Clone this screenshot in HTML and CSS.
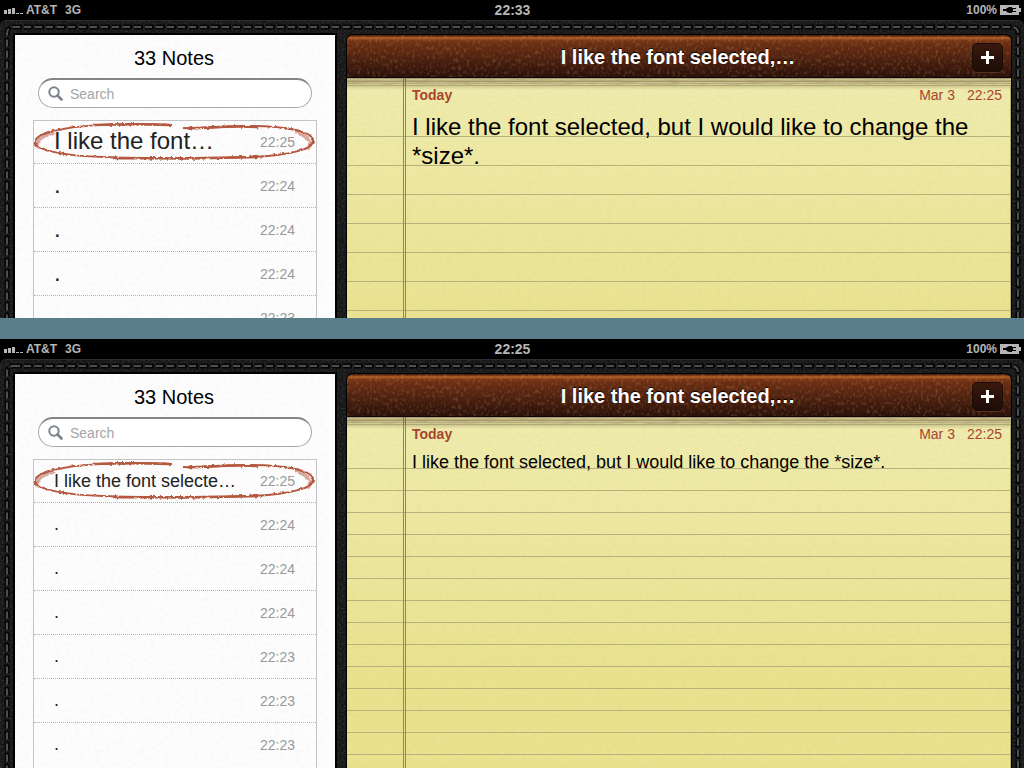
FILE: index.html
```
<!DOCTYPE html>
<html lang="en">

<head>
    <meta charset="utf-8">
    <title>Notes</title>
    <link rel="stylesheet" href="styles.css">
</head>

<body>
    <!-- shared drawings -->
    <svg class="defs" width="0" height="0" aria-hidden="true">
        <defs>
            <filter id="rough" x="-5%" y="-20%" width="110%" height="140%">
                <feTurbulence type="fractalNoise" baseFrequency="0.3" numOctaves="2" seed="4" result="n" />
                <feDisplacementMap in="SourceGraphic" in2="n" scale="3" xChannelSelector="R" yChannelSelector="G" />
            </filter>
            <symbol id="signal" viewBox="0 0 19 6">
                <path d="M0 2h3v4h-3zM4 1h3v5h-3zM8 0h3v6h-3zM12 5h3v1h-3zM16 5h3v1h-3z" fill="#b5b5b5" />
            </symbol>
            <symbol id="battery" viewBox="0 0 21 10">
                <path d="M0 0h19v3h2v4h-2v3h-19z" fill="#b5b5b5" />
                <path d="M3 4h3c1-1 2-2 4-2h2v1h4v1h-3v2h3v1h-4v1h-2c-2 0-3-1-4-2h-3z" fill="#000" />
            </symbol>
            <symbol id="lens" viewBox="0 0 15 15">
                <circle cx="6" cy="6" r="4.7" fill="none" stroke="#7c838e" stroke-width="2" />
                <path d="M9.5 9.5l4 4" stroke="#7c838e" stroke-width="2.6" stroke-linecap="round" />
            </symbol>
            <symbol id="circled" viewBox="0 0 284 42">
                <g fill="none" stroke="#b5583f" filter="url(#rough)">
                    <path d="M139 4C100 2 55 3 30 8C8 12 1 17 2 22C5 30 35 35 70 36C130 38 190 38 235 35C265 32 281 27 280 19C279 11 256 5 215 5C190 5 170 8 150 7" stroke-width="2" />
                    <path d="M60 4C90 3 110 3 136 4M155 7C180 7 195 4 225 6M80 37C120 38 170 37 225 36" stroke-width="2.5" />
                    <path d="M22 11C3 16 2 23 6 28M262 10C276 16 281 22 274 28" stroke-width="4" opacity=".5" />
                </g>
            </symbol>
        </defs>
    </svg>

    <section class="device device-top">
        <div class="status">
            <div class="carrier"><svg class="signal"><use href="#signal" /></svg><span>AT&amp;T</span><span>3G</span></div>
            <div class="clock">22:33</div>
            <div class="power"><span>100%</span><svg class="battery"><use href="#battery" /></svg></div>
        </div>
        <div class="case">
            <svg class="stitch" aria-hidden="true"><rect class="groove" /><rect class="thread" /></svg>
            <aside class="sidebar">
                <h2>33 Notes</h2>
                <div class="search">
                    <svg class="lens"><use href="#lens" /></svg>
                    <input type="search" placeholder="Search" aria-label="Search">
                </div>
                <ul class="list list-large">
                    <li class="selected"><svg class="circled"><use href="#circled" /></svg><a href="#">I like the font…</a><time>22:25</time></li>
                    <li><a href="#">.</a><time>22:24</time></li>
                    <li><a href="#">.</a><time>22:24</time></li>
                    <li><a href="#">.</a><time>22:24</time></li>
                    <li><a href="#">.</a><time>22:23</time></li>
                </ul>
            </aside>
            <main class="note">
                <header class="leather">
                    <h1>I like the font selected,…</h1>
                    <button class="add" type="button" aria-label="New note"></button>
                </header>
                <div class="torn"></div>
                <article class="paper paper-large">
                    <div class="date"><b>Today</b><span>Mar 3</span><span>22:25</span></div>
                    <p>I like the font selected, but I would like to change the *size*.</p>
                </article>
            </main>
        </div>
    </section>

    <section class="device device-bottom">
        <div class="status">
            <div class="carrier"><svg class="signal"><use href="#signal" /></svg><span>AT&amp;T</span><span>3G</span></div>
            <div class="clock">22:25</div>
            <div class="power"><span>100%</span><svg class="battery"><use href="#battery" /></svg></div>
        </div>
        <div class="case">
            <svg class="stitch" aria-hidden="true"><rect class="groove" /><rect class="thread" /></svg>
            <aside class="sidebar">
                <h2>33 Notes</h2>
                <div class="search">
                    <svg class="lens"><use href="#lens" /></svg>
                    <input type="search" placeholder="Search" aria-label="Search">
                </div>
                <ul class="list">
                    <li class="selected"><svg class="circled"><use href="#circled" /></svg><a href="#">I like the font selecte…</a><time>22:25</time></li>
                    <li><a href="#">.</a><time>22:24</time></li>
                    <li><a href="#">.</a><time>22:24</time></li>
                    <li><a href="#">.</a><time>22:24</time></li>
                    <li><a href="#">.</a><time>22:23</time></li>
                    <li><a href="#">.</a><time>22:23</time></li>
                    <li><a href="#">.</a><time>22:23</time></li>
                </ul>
            </aside>
            <main class="note">
                <header class="leather">
                    <h1>I like the font selected,…</h1>
                    <button class="add" type="button" aria-label="New note"></button>
                </header>
                <div class="torn"></div>
                <article class="paper">
                    <div class="date"><b>Today</b><span>Mar 3</span><span>22:25</span></div>
                    <p>I like the font selected, but I would like to change the *size*.</p>
                </article>
            </main>
        </div>
    </section>
</body>

</html>
```

FILE: styles.css
```
* {
    box-sizing: border-box;
}

body {
    margin: 0;
    height: 100vh;
    display: flex;
    flex-direction: column;
    gap: 21px;
    background: #5b7f8a;
    font-family: "Liberation Sans", Arial, sans-serif;
    overflow: hidden;
}

.defs {
    position: absolute;
}

.device {
    display: flex;
    flex-direction: column;
    overflow: hidden;
    background: #000;
    min-height: 0;
}

.device-top {
    flex: 318 1 0;
}

.device-bottom {
    flex: 429 1 0;
}

/* status bar */
.status {
    flex: none;
    display: grid;
    grid-template-columns: 1fr auto 1fr;
    align-items: center;
    height: 20px;
    padding: 0 3px 1px 4px;
    color: #b5b5b5;
    font-size: 12px;
    font-weight: bold;
}

.clock {
    font-size: 14px;
}

.carrier,
.power {
    display: flex;
    align-items: center;
}

.carrier {
    gap: 8px;
}

.signal {
    width: 19px;
    height: 6px;
    margin: 3px -5px 0 0;
}

.power {
    justify-content: flex-end;
    gap: 3px;
}

.battery {
    width: 21px;
    height: 10px;
}

/* black leather case */
.case {
    position: relative;
    flex: 1;
    display: flex;
    gap: 12px;
    min-height: 0;
    padding: 14px 13px 0 15px;
    border-top: 1px solid #2c2f30;
    border-radius: 6px 6px 0 0;
    background: url("data:image/svg+xml,%3Csvg xmlns='http://www.w3.org/2000/svg' width='200' height='200'%3E%3Cfilter id='f' x='0' y='0' width='1' height='1'%3E%3CfeTurbulence type='fractalNoise' baseFrequency='.5' numOctaves='2' stitchTiles='stitch'/%3E%3CfeColorMatrix values='0 0 0 0 .35 0 0 0 0 .36 0 0 0 0 .36 .8 0 0 0 -.3'/%3E%3C/filter%3E%3Crect width='200' height='200' filter='url(%23f)' opacity='.5'/%3E%3C/svg%3E") #151515;
}

.stitch {
    position: absolute;
    inset: 0;
    width: 100%;
    height: 100%;
}

.stitch rect {
    x: 7px;
    y: 6px;
    width: calc(100% - 13px);
    height: calc(100% + 40px);
    rx: 6px;
    fill: none;
}

.groove {
    stroke: #060606;
    stroke-width: 5px;
    stroke-dasharray: 9 2;
}

.thread {
    stroke: #6c6e6e;
    stroke-width: 2px;
    stroke-dasharray: 7 4;
    stroke-opacity: .7;
}

/* list of notes */
.sidebar {
    position: relative;
    flex: none;
    width: 320px;
    padding: 0 18px;
    background: url("data:image/svg+xml,%3Csvg xmlns='http://www.w3.org/2000/svg' width='200' height='200'%3E%3Cfilter id='f' x='0' y='0' width='1' height='1'%3E%3CfeTurbulence type='fractalNoise' baseFrequency='.2 .25' numOctaves='3' stitchTiles='stitch'/%3E%3CfeColorMatrix values='0 0 0 0 .5 0 0 0 0 .5 0 0 0 0 .5 .7 0 0 0 -.27'/%3E%3C/filter%3E%3Crect width='200' height='200' filter='url(%23f)' opacity='.2'/%3E%3C/svg%3E") #fdfdfd;
    box-shadow: 0 0 0 2px #000;
}

.sidebar h2 {
    margin: 0 2px 0 0;
    padding-top: 11px;
    font-size: 20px;
    line-height: 24px;
    font-weight: normal;
    text-align: center;
}

.search {
    display: flex;
    align-items: center;
    gap: 7px;
    height: 30px;
    margin: 8px 5px 12px;
    padding: 0 9px;
    border: 1px solid #a9a9ab;
    border-top: 2px solid #858587;
    border-radius: 15px;
    background: #fff;
}

.lens {
    flex: none;
    width: 15px;
    height: 15px;
}

.search input {
    width: 100%;
    padding: 0;
    border: 0;
    outline: 0;
    background: none;
    font: 14px "Liberation Sans", Arial, sans-serif;
}

.search input::placeholder {
    color: #a5a5a5;
}

.list {
    margin: 0;
    padding: 0 0 12px;
    list-style: none;
    border: 1px solid #c4c4c4;
}

.list li {
    position: relative;
    display: flex;
    align-items: center;
    justify-content: space-between;
    height: 44px;
    padding: 0 21px 0 20px;
    border-bottom: 1px dotted #b4b4b4;
}

.list li:last-child {
    border-bottom-color: transparent;
}

.list .selected {
    height: 43px;
}

.list a {
    color: #222;
    font-size: 18px;
    text-decoration: none;
}

.list-large a {
    font-size: 24px;
    line-height: 26px;
    padding-bottom: 2px;
}

.list time {
    color: #999;
    font-size: 14px;
}

.circled {
    position: absolute;
    inset: 0 -1px;
    width: 284px;
    height: 42px;
    overflow: visible;
}

/* note */
.note {
    position: relative;
    flex: 1;
    display: flex;
    flex-direction: column;
    min-width: 0;
    box-shadow: 0 0 0 1px #000;
    border-radius: 6px 6px 0 0;
}

.leather {
    flex: none;
    display: flex;
    align-items: center;
    height: 43px;
    padding: 2px 8px 0;
    border-bottom: 1px solid #120603;
    border-radius: 6px 6px 0 0;
    background:
        url("data:image/svg+xml,%3Csvg xmlns='http://www.w3.org/2000/svg' width='300' height='60'%3E%3Cfilter id='f' x='0' y='0' width='1' height='1'%3E%3CfeTurbulence type='fractalNoise' baseFrequency='.35 .25' numOctaves='2' stitchTiles='stitch'/%3E%3CfeColorMatrix values='0 0 0 0 .75 0 0 0 0 .33 0 0 0 0 .12 3 0 0 0 -1.5'/%3E%3C/filter%3E%3Crect width='300' height='60' filter='url(%23f)' opacity='.25'/%3E%3C/svg%3E"),
        linear-gradient(#35170a 0, #8a441a 2px, #b8642a 3px, #7a3a14 5px, #6b2f14 8px, #4a200f 60%, #29110a);
}

.leather h1 {
    flex: 1;
    margin: 0 0 0 29px;
    color: #fff;
    font-size: 20px;
    line-height: 24px;
    text-align: center;
    text-shadow: 0 -1px 1px #000;
}

.add {
    position: relative;
    width: 31px;
    height: 29px;
    padding: 0;
    border: 1px solid #1d0c06;
    border-radius: 5px;
    background: linear-gradient(#39190d, #1d0c07);
    box-shadow: 0 1px 0 #54301f;
}

.add::before,
.add::after {
    content: "";
    position: absolute;
    inset: 12px 8px;
    background: #fff;
}

.add::after {
    inset: 7px 13px;
}

/* remains of the torn off sheets */
.torn {
    flex: none;
    height: 8px;
    background:
        linear-gradient(90deg, transparent 56px, #a06048 56px, #a06048 57px, transparent 57px, transparent 58px, #a06048 58px, #a06048 59px, transparent 59px),
        url("data:image/svg+xml,%3Csvg xmlns='http://www.w3.org/2000/svg' width='400' height='8'%3E%3Cfilter id='f' x='0' y='0' width='1' height='1'%3E%3CfeTurbulence type='fractalNoise' baseFrequency='.06 .7' numOctaves='3' stitchTiles='stitch'/%3E%3CfeColorMatrix values='0 0 0 0 .4 0 0 0 0 .33 0 0 0 0 .15 3 0 0 0 -1.3'/%3E%3C/filter%3E%3Crect width='400' height='8' filter='url(%23f)' opacity='.6'/%3E%3C/svg%3E"),
        linear-gradient(#857e5a, #cfc898 15%, #c2b780 30%, #96885a 42%, #dcd6a0 52%, #a59d6f 65%, #e0daa0 76%, #9f986c);
}

.paper {
    flex: 1;
    padding: 0 8px 0 65px;
    border-right: 1px solid #b8b06e;
    background:
        linear-gradient(90deg, transparent 56px, #b87458 56px, #b87458 57px, transparent 57px, transparent 58px, #b87458 58px, #b87458 59px, transparent 59px),
        repeating-linear-gradient(transparent 0, transparent 21px, #b7b17c 21px, #b7b17c 22px) 0 22px,
        url("data:image/svg+xml,%3Csvg xmlns='http://www.w3.org/2000/svg' width='200' height='200'%3E%3Cfilter id='f' x='0' y='0' width='1' height='1'%3E%3CfeTurbulence type='fractalNoise' baseFrequency='.2 .3' numOctaves='3' stitchTiles='stitch'/%3E%3CfeColorMatrix values='0 0 0 0 .55 0 0 0 0 .5 0 0 0 0 .2 .8 0 0 0 -.3'/%3E%3C/filter%3E%3Crect width='200' height='200' filter='url(%23f)' opacity='.25'/%3E%3C/svg%3E"),
        linear-gradient(#cfc98f, #efebac 4px, #e9e28e 250px);
    background-repeat: repeat, no-repeat, repeat, no-repeat;
}

.date {
    display: flex;
    gap: 12px;
    color: #a8442f;
    font-size: 14px;
    line-height: 18px;
}

.date b {
    flex: 1;
}

.paper p {
    margin: 8px 0 0;
    font-size: 18px;
    line-height: 22px;
}

.paper-large {
    background-image:
        linear-gradient(90deg, transparent 56px, #b87458 56px, #b87458 57px, transparent 57px, transparent 58px, #b87458 58px, #b87458 59px, transparent 59px),
        repeating-linear-gradient(transparent 0, transparent 28px, #b7b17c 28px, #b7b17c 29px),
        url("data:image/svg+xml,%3Csvg xmlns='http://www.w3.org/2000/svg' width='200' height='200'%3E%3Cfilter id='f' x='0' y='0' width='1' height='1'%3E%3CfeTurbulence type='fractalNoise' baseFrequency='.2 .3' numOctaves='3' stitchTiles='stitch'/%3E%3CfeColorMatrix values='0 0 0 0 .55 0 0 0 0 .5 0 0 0 0 .2 .8 0 0 0 -.3'/%3E%3C/filter%3E%3Crect width='200' height='200' filter='url(%23f)' opacity='.25'/%3E%3C/svg%3E"),
        linear-gradient(#cfc98f, #efebac 4px, #e9e28e 250px);
}

.paper-large p {
    font-size: 24px;
    line-height: 29px;
}
```
